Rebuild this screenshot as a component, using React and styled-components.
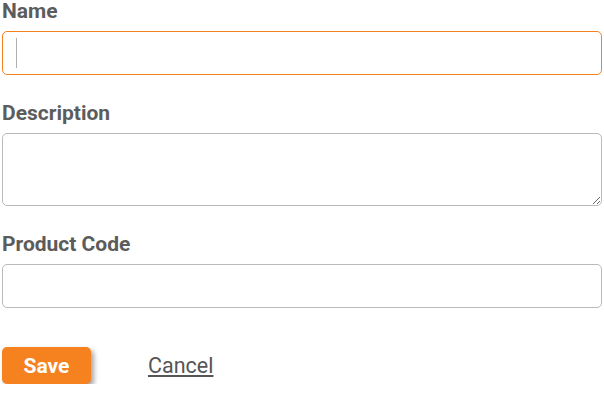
import styled, { createGlobalStyle } from "styled-components";

const GlobalStyle = createGlobalStyle`
    * { box-sizing: border-box; }
    body {
        margin: 0;
        background: #ffffff;
        font-family: Roboto, "Liberation Sans", sans-serif;
    }
`

export default function App(){
    return(
    <Form onSubmit={(e) => e.preventDefault()}>
        <GlobalStyle/>
        <Field>
            <Label>Name</Label>
            <InputWrap>
                <Input focused />
                <Caret/>
            </InputWrap>
        </Field>
        <Field>
            <Label>Description</Label>
            <TextArea/>
        </Field>
        <Field>
            <Label>Product Code</Label>
            <Input/>
        </Field>
        <Actions>
            <SaveButton type="submit">Save</SaveButton>
            <CancelLink href="#">Cancel</CancelLink>
        </Actions>
    </Form>)
}

const Form = styled.form`
    width: 604px;
    padding: 0 2px;
    display: flex;
    flex-direction: column;
`

const Field = styled.div`
    display: flex;
    flex-direction: column;
    margin-bottom: 27px;
`

const Label = styled.label`
    font-family: Roboto, "Liberation Sans", sans-serif;
    font-weight: 700;
    font-size: 21px;
    line-height: 22px;
    color: #5c5c5c;
    margin-bottom: 9px;
`

const InputWrap = styled.div`
    position: relative;
`

const Input = styled.input`
    width: 100%;
    height: 44px;
    padding: 0 14px;
    border: 1px solid ${props => props.focused ? "#f58220" : "#bababa"};
    border-radius: 5px;
    outline: none;
    font-family: Roboto, "Liberation Sans", sans-serif;
    font-size: 16px;
    color: #333;
    background: #fff;
`

const Caret = styled.span`
    position: absolute;
    left: 14px;
    top: 7px;
    width: 1px;
    height: 30px;
    background: #b0b0b0;
`

const TextArea = styled.textarea`
    width: 100%;
    height: 73px;
    padding: 10px 14px;
    border: 1px solid #bababa;
    border-radius: 5px;
    outline: none;
    font-family: Roboto, "Liberation Sans", sans-serif;
    font-size: 16px;
    display: block;
`

const Actions = styled.div`
    display: flex;
    align-items: center;
    gap: 57px;
    margin-top: 12px;
`

const SaveButton = styled.button`
    width: 89px;
    height: 37px;
    border: none;
    border-radius: 5px;
    background: #f5821f;
    color: #ffffff;
    font-family: Roboto, "Liberation Sans", sans-serif;
    font-weight: 700;
    font-size: 21px;
    box-shadow: 3px 3px 5px rgba(0, 0, 0, 0.35);
    cursor: pointer;
`

const CancelLink = styled.a`
    font-family: Roboto, "Liberation Sans", sans-serif;
    font-size: 21.5px;
    color: #555555;
    text-decoration: underline;
    text-underline-offset: 2px;
`
